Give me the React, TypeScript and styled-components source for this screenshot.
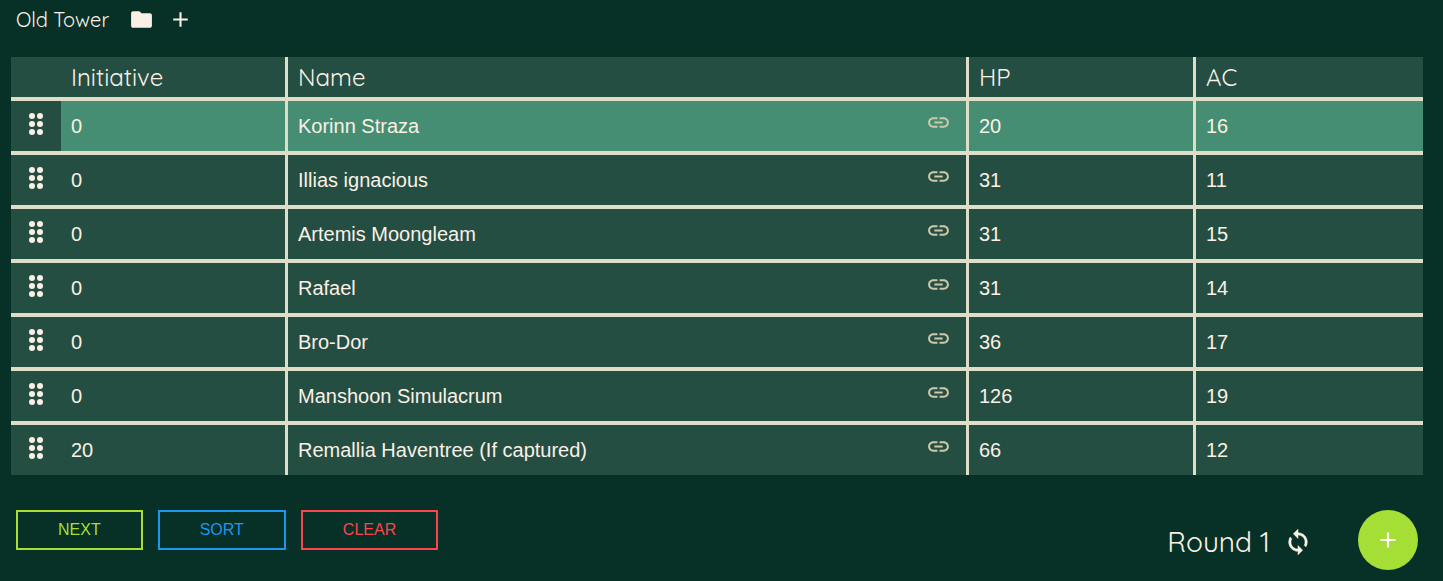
import React, { useState } from "react";
import styled, { createGlobalStyle, css } from "styled-components";
import { MdAdd, MdFolder, MdLink, MdSync } from "react-icons/md";

const colors = {
  page: "#073027",
  cell: "#254e43",
  active: "#468e73",
  line: "#dfdcc8",
  text: "#faf0e6",
  muted: "#cdc8ab",
  green: "#a5df36",
  blue: "#1d96f0",
  red: "#ff434c",
};

const sans = `Arial, "Liberation Sans", sans-serif`;
const display = `Quicksand, Lato, "Liberation Sans", sans-serif`;

const GlobalStyle = createGlobalStyle`
  * { box-sizing: border-box; }
  body {
    margin: 0;
    background: ${colors.page};
    color: ${colors.text};
    font-family: ${display};
  }
`;

const Page = styled.main`
  padding: 0 20px 0 11px;
`;

const TopBar = styled.header`
  display: flex;
  align-items: center;
  height: 39px;
  padding-left: 5px;
  margin-bottom: 18px;
`;

const Title = styled.h1`
  margin: 0 20px 0 0;
  font-size: 20px;
  font-weight: 400;
  line-height: 24px;
`;

const IconButton = styled.button`
  display: flex;
  align-items: center;
  padding: 0;
  margin-right: 14px;
  border: 0;
  background: none;
  color: inherit;
  cursor: pointer;
`;

const Table = styled.table`
  width: 100%;
  table-layout: fixed;
  border-collapse: separate;
  border-spacing: 0;
  background: ${colors.cell};
`;

const Column = styled.col<{ $width?: string }>`
  width: ${(p) => p.$width ?? "auto"};
`;

const divider = css`
  border-right: 3px solid ${colors.line};
  &:last-child { border-right: 0; }
`;

const HeadCell = styled.th`
  ${divider}
  height: 44px;
  padding: 0 10px;
  border-bottom: 4px solid ${colors.line};
  font-size: 24px;
  font-weight: 400;
  line-height: 40px;
  text-align: left;

  &:first-child { padding-left: 60px; }
`;

const Row = styled.tr<{ $active?: boolean }>`
  --fill: ${(p) => (p.$active ? colors.active : colors.cell)};
`;

const Cell = styled.td`
  ${divider}
  padding: 0;
  border-bottom: 4px solid ${colors.line};

  tr:last-child > & { border-bottom: 0; }
`;

const CellContent = styled.div`
  display: flex;
  align-items: center;
  height: 50px;
  background: var(--fill);
`;

const Grip = styled.button`
  display: flex;
  flex: none;
  align-items: center;
  justify-content: center;
  width: 50px;
  height: 50px;
  padding: 0 0 4px;
  border: 0;
  background: ${colors.cell};
  color: ${colors.text};
  cursor: grab;
`;

const Field = styled.input`
  flex: 1;
  min-width: 0;
  height: 50px;
  padding: 0 10px;
  border: 0;
  outline: 0;
  background: transparent;
  color: ${colors.text};
  font-family: ${sans};
  font-size: 20px;
`;

const SheetLink = styled.a`
  display: flex;
  flex: none;
  padding: 0 15px 7px 0;
  color: ${colors.muted};
`;

const Footer = styled.footer`
  display: flex;
  justify-content: space-between;
  padding: 35px 5px 11px;
`;

const Actions = styled.div`
  display: flex;
  align-items: flex-start;
  gap: 15px;
`;

const ActionButton = styled.button<{ $color: string }>`
  height: 40px;
  padding: 0 40px;
  border: 2px solid ${(p) => p.$color};
  background: transparent;
  color: ${(p) => p.$color};
  font-family: ${sans};
  font-size: 16px;
  text-transform: uppercase;
  cursor: pointer;
`;

const RoundArea = styled.div`
  display: flex;
  align-items: center;
`;

const RoundLabel = styled.p`
  margin: 0 14px 0 0;
  font-size: 28px;
  line-height: 36px;
`;

const RoundStatus = styled.div`
  display: flex;
  align-items: center;
  padding-top: 4px;
  margin-right: 32px;
`;

const SyncIcon = styled(MdSync)`
  path:last-child {
    stroke: currentColor;
    stroke-width: 0.4px;
  }
`;

const AddButton = styled.button`
  display: flex;
  align-items: center;
  justify-content: center;
  width: 60px;
  height: 60px;
  padding: 0;
  border: 0;
  border-radius: 50%;
  background: ${colors.green};
  color: #fff;
  cursor: pointer;
`;

function GripDots() {
  return (
    <svg width="14" height="22" viewBox="0 0 14 22" fill="currentColor" aria-hidden="true">
      {[3, 11].map((x) => [3, 11, 19].map((y) => <circle key={`${x}-${y}`} cx={x} cy={y} r="3" />))}
    </svg>
  );
}

interface Combatant {
  initiative: string;
  name: string;
  hp: string;
  ac: string;
}

const initial: Combatant[] = [
  { initiative: "0", name: "Korinn Straza", hp: "20", ac: "16" },
  { initiative: "0", name: "Illias ignacious", hp: "31", ac: "11" },
  { initiative: "0", name: "Artemis Moongleam", hp: "31", ac: "15" },
  { initiative: "0", name: "Rafael", hp: "31", ac: "14" },
  { initiative: "0", name: "Bro-Dor", hp: "36", ac: "17" },
  { initiative: "0", name: "Manshoon Simulacrum", hp: "126", ac: "19" },
  { initiative: "20", name: "Remallia Haventree (If captured)", hp: "66", ac: "12" },
];

export default function App() {
  const [rows, setRows] = useState(initial);
  const [turn, setTurn] = useState(0);
  const [round, setRound] = useState(1);

  const field = (index: number, key: keyof Combatant, label: string) => (
    <Field
      aria-label={`${label}, row ${index + 1}`}
      value={rows[index][key]}
      onChange={(e) =>
        setRows(rows.map((r, i) => (i === index ? { ...r, [key]: e.target.value } : r)))
      }
    />
  );

  const next = () => {
    if (turn + 1 < rows.length) {
      setTurn(turn + 1);
    } else {
      setTurn(0);
      setRound(round + 1);
    }
  };

  const sort = () =>
    setRows([...rows].sort((a, b) => Number(b.initiative) - Number(a.initiative)));

  const add = () => setRows([...rows, { initiative: "0", name: "", hp: "", ac: "" }]);

  return (
    <>
      <GlobalStyle />
      <Page>
        <TopBar>
          <Title>Old Tower</Title>
          <IconButton aria-label="Open encounter"><MdFolder size={25} /></IconButton>
          <IconButton aria-label="New encounter"><MdAdd size={25} /></IconButton>
        </TopBar>

        <Table>
          <colgroup>
            <Column $width="277px" />
            <Column />
            <Column $width="227px" />
            <Column $width="227px" />
          </colgroup>
          <thead>
            <tr>
              <HeadCell scope="col">Initiative</HeadCell>
              <HeadCell scope="col">Name</HeadCell>
              <HeadCell scope="col">HP</HeadCell>
              <HeadCell scope="col">AC</HeadCell>
            </tr>
          </thead>
          <tbody>
            {rows.map((_, i) => (
              <Row key={i} $active={i === turn}>
                <Cell>
                  <CellContent>
                    <Grip aria-label={`Move row ${i + 1}`}><GripDots /></Grip>
                    {field(i, "initiative", "Initiative")}
                  </CellContent>
                </Cell>
                <Cell>
                  <CellContent>
                    {field(i, "name", "Name")}
                    <SheetLink href="#sheet" aria-label={`Sheet for row ${i + 1}`}>
                      <MdLink size={25} />
                    </SheetLink>
                  </CellContent>
                </Cell>
                <Cell><CellContent>{field(i, "hp", "HP")}</CellContent></Cell>
                <Cell><CellContent>{field(i, "ac", "AC")}</CellContent></Cell>
              </Row>
            ))}
          </tbody>
        </Table>

        <Footer>
          <Actions>
            <ActionButton $color={colors.green} onClick={next}>Next</ActionButton>
            <ActionButton $color={colors.blue} onClick={sort}>Sort</ActionButton>
            <ActionButton $color={colors.red} onClick={() => setRows([])}>Clear</ActionButton>
          </Actions>
          <RoundArea>
            <RoundStatus>
              <RoundLabel>Round {round}</RoundLabel>
              <IconButton aria-label="Reset round" onClick={() => setRound(1)}>
                <SyncIcon size={28} />
              </IconButton>
            </RoundStatus>
            <AddButton aria-label="Add combatant" onClick={add}><MdAdd size={26} /></AddButton>
          </RoundArea>
        </Footer>
      </Page>
    </>
  );
}
